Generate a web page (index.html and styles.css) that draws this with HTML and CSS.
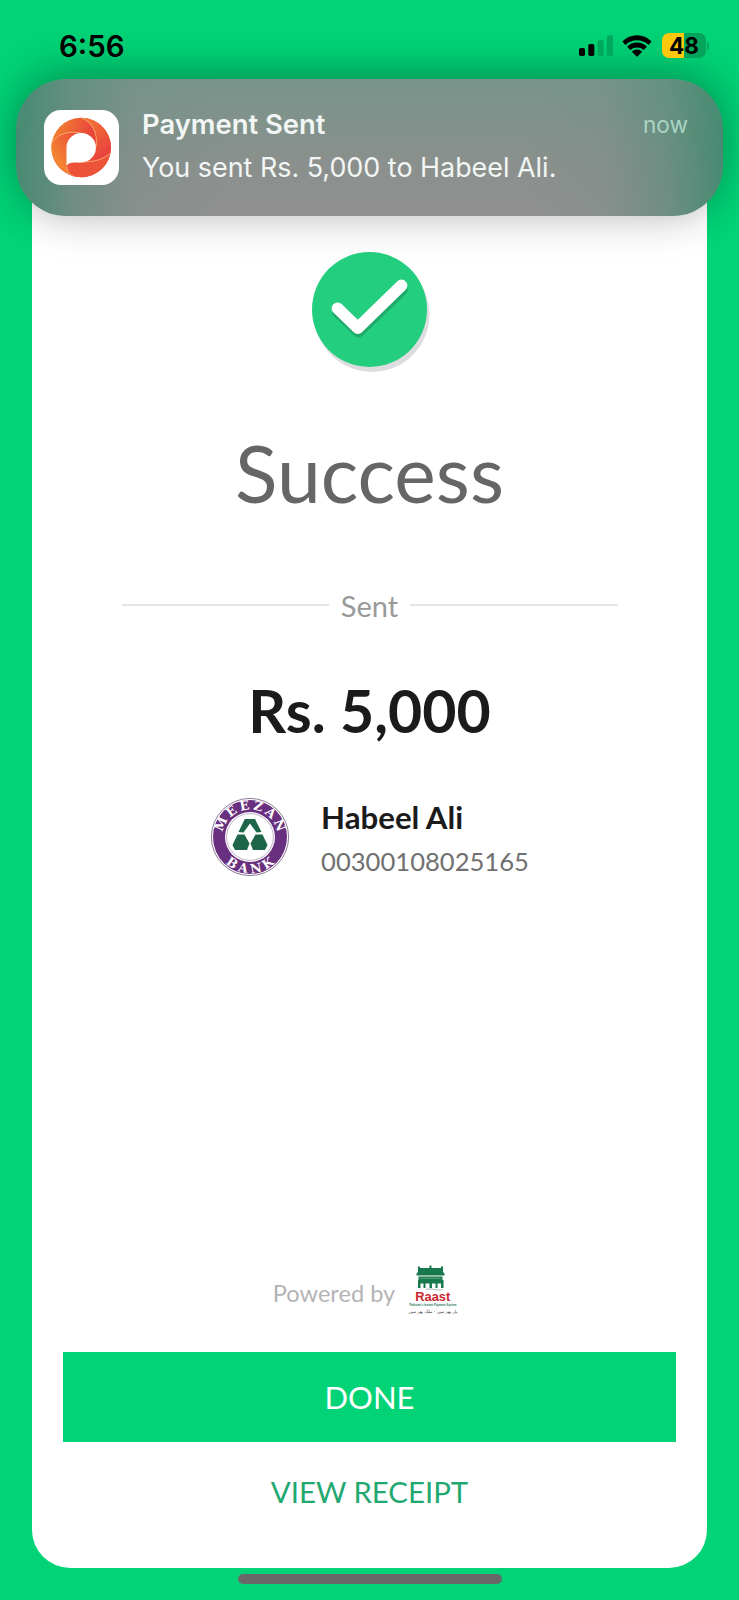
FILE: index.html
```html
<!DOCTYPE html>
<html lang="en">
<head>
<meta charset="utf-8">
<title>Payment Sent</title>
<link rel="stylesheet" href="styles.css">
</head>
<body>
<div class="screen">
  <header class="status">
    <span class="time">6:56</span>
    <div class="indicators">
      <svg class="signal" width="34" height="22" viewBox="0 0 34 22">
        <rect x="0" y="13" width="6" height="8" rx="1.8"/>
        <rect x="9.3" y="9" width="6" height="12" rx="1.8"/>
        <rect class="off" x="18.6" y="5" width="6" height="16" rx="1.8"/>
        <rect class="off" x="27.9" y="0.3" width="6" height="20.7" rx="1.8"/>
      </svg>
      <svg class="wifi" width="30" height="22" viewBox="0 0 30 22">
        <path d="M0.4 6.6C8.500-1.800 21.500-1.800 29.600 6.600L26.500 9.900C20.200 3.700 9.800 3.700 3.500 9.900Z"/>
        <path d="M5.100 11.700C10.700 6.200 19.300 6.200 24.900 11.700L21.700 15C18 11.700 12 11.700 8.300 15Z"/>
        <path d="M9.900 16.700C12.900 13.900 17.100 13.900 20.100 16.700L15.700 21.300Q15 22 14.300 21.300Z"/>
      </svg>
      <div class="battery"><span class="level">48</span><i class="cap"></i></div>
    </div>
  </header>

  <main class="card">
    <svg class="check" width="120" height="124" viewBox="0 0 120 124">
      <circle class="check-shadow" cx="60" cy="62.500" r="57.500"/>
      <circle class="check-disc" cx="57.500" cy="57.500" r="57.500"/>
      <path class="check-under" d="M26 60L46.500 79.500L90 37.500"/>
      <path class="check-mark" d="M25.500 56.300L45.800 76L89.500 33.500"/>
    </svg>
    <h1 class="title">Success</h1>
    <div class="divider"><span>Sent</span></div>
    <p class="amount">Rs. 5,000</p>
    <section class="payee">
      <svg class="bank" width="80" height="80" viewBox="0 0 80 80">
        <defs>
          <path id="arc-top" d="M12.500 40A27.500 27.500 0 0 1 67.500 40"/>
          <path id="arc-bottom" d="M4 40A36 36 0 0 0 76 40"/>
        </defs>
        <circle class="bank-rim" cx="40" cy="40" r="38.600"/>
        <circle class="bank-ring" cx="40" cy="40" r="37"/>
        <circle class="bank-core" cx="40" cy="40" r="25"/>
        <circle class="bank-line" cx="40" cy="40" r="23.400"/>
        <text class="bank-text"><textPath href="#arc-top" startOffset="50%" text-anchor="middle" textLength="77">MEEZAN</textPath></text>
        <text class="bank-text"><textPath href="#arc-bottom" startOffset="50%" text-anchor="middle" textLength="54">BANK</textPath></text>
        <path class="bank-sign" d="M34.800 22H45L51.500 35L46.500 35.500L40 26.500L33.500 35.500L28.500 35ZM27.500 37.500H34.500L39.500 46.500L37 53H25L22.500 48ZM45.500 37.500H52.500L57.500 48L55 53H43L40.500 46.500Z"/>
      </svg>
      <div class="payee-info">
        <span class="name">Habeel Ali</span>
        <span class="account">00300108025165</span>
      </div>
    </section>
    <div class="powered">
      <span>Powered by</span>
      <svg class="raast" width="52" height="54" viewBox="0 0 52 54">
        <path class="green" d="M21.500 0.500H23.500V3H33V1.500H35V7L36.500 8.500V10.500H8.500V8.500L10 7V1.500H12V3H21.500ZM10.500 11.500H34.500V15H10.500ZM10 15H35.500V23H33V18.500H29.500V23H27.500V18.500H24V23H21.500V18.500H17.500V23H15.500V18.500H12.500V23H10Z"/>
        <path class="slit" d="M12 13.300H33"/>
        <path class="swoosh" d="M18 24.500C23 22 28 27 35 24.500"/>
        <text class="raast-name" x="7.300" y="36.400" textLength="35" lengthAdjust="spacingAndGlyphs">Raast</text>
        <text class="raast-tag" x="1.500" y="40.500" textLength="47" lengthAdjust="spacingAndGlyphs">Pakistan's Instant Payment System</text>
        <text class="raast-urdu" x="25" y="48" text-anchor="middle">پل بھر میں - ملک بھر میں</text>
      </svg>
    </div>
    <button class="done">DONE</button>
    <a class="receipt">VIEW RECEIPT</a>
  </main>
  <div class="home-bar"></div>

  <aside class="notice">
    <svg class="app" width="75" height="75" viewBox="0 0 75 75">
      <defs>
        <linearGradient id="g1" x1="0" y1="0" x2="1" y2="0.300"><stop offset="0" stop-color="#f28b30"/><stop offset="0.700" stop-color="#e9443b"/></linearGradient>
        <linearGradient id="g2" x1="0" y1="0" x2="0.600" y2="1"><stop offset="0" stop-color="#f47f34"/><stop offset="1" stop-color="#e8403c"/></linearGradient>
        <linearGradient id="g3" x1="1" y1="0" x2="0" y2="1"><stop offset="0" stop-color="#ea403b"/><stop offset="0.700" stop-color="#f38333"/></linearGradient>
      </defs>
      <rect width="75" height="75" rx="17" fill="#fff"/>
      <circle cx="37.200" cy="37.500" r="29.800" fill="url(#g1)"/>
      <path d="M37 7.700C49 12 54 24 52 37C51 45 46 51 39 52H33C44 54 57 52 66.500 43A29.800 29.800 0 0 0 37 7.700Z" fill="url(#g2)"/>
      <path d="M7.700 33C14 23 25 21 39 23C26 25 23 31 23 39V57C23 61 26 65 29 66.100A29.800 29.800 0 0 1 7.700 33Z" fill="url(#g3)"/>
      <path d="M23 57C26 50 34 52 42 52C53 52 60 49 66.500 43A29.800 29.800 0 0 1 29 66.100C26 64 23 60 23 57Z" fill="#ed5338"/>
      <path class="seam" d="M37 7.700C49 12 54 24 52 37M7.700 33C14 23 25 21 37 23M66.500 43C57 52 44 52 34 52M23 57C23 61 26 65 29 66"/>
      <path d="M22.500 55.500V37.700A14.700 14.700 0 1 1 37.200 52.400H30Q25 52.400 22.500 55.500Z" fill="#fff"/>
    </svg>
    <div class="notice-text">
      <div class="notice-head"><strong>Payment Sent</strong><time>now</time></div>
      <p>You sent Rs. 5,000 to Habeel Ali.</p>
    </div>
  </aside>
</div>
</body>
</html>
```
FILE: styles.css
```css
* { box-sizing: border-box; }
body { margin: 0; }
.screen {
  position: relative;
  display: flex;
  flex-direction: column;
  align-items: center;
  width: 739px;
  height: 1600px;
  overflow: hidden;
  background: #02d376;
  font-family: Lato, sans-serif;
}

.status {
  display: flex;
  justify-content: space-between;
  width: 100%;
  height: 110px;
  padding: 28px 29px 0 59px;
  font-family: Inter, sans-serif;
  position: relative;
  z-index: 2;
}
.time { font-size: 29.5px; line-height: 36px; font-weight: 600; }
.indicators { display: flex; height: 35px; align-items: center; }
.off { fill: #00a85d; }
.wifi { margin: 0 10px 0 9px; }
.battery { display: flex; align-items: center; }
.level {
  width: 44px;
  height: 25px;
  border-radius: 7px;
  background: linear-gradient(90deg, #fdc70c 50%, #05a45c 50%);
  font-size: 22.5px;
  font-weight: 700;
  line-height: 25px;
  text-align: center;
}
.cap { width: 2px; height: 8px; margin: 0 1px; border-radius: 0 2px 2px 0; background: #05a45c; }

.card {
  display: flex;
  flex-direction: column;
  align-items: center;
  width: 675px;
  height: 1458px;
  padding-top: 142px;
  border-radius: 38px;
  background: #fff;
}
.check-shadow { fill: #dddde0; }
.check-disc { fill: #24ce7f; }
.check-under, .check-mark { fill: none; stroke-width: 11.8; stroke-linecap: round; stroke-linejoin: round; }
.check-under { stroke: #1eaa69; }
.check-mark { stroke: #fff; }
.check { margin-left: 4px; }
.title { margin: 57px 0 0; font-size: 78.6px; line-height: 80px; font-weight: 400; color: #666; }
.divider {
  display: flex;
  align-items: center;
  gap: 12px;
  width: 496px;
  height: 36px;
  margin-top: 74px;
  font-size: 29px;
  color: #999;
}
.divider::before, .divider::after { content: ""; flex: 1; height: 2px; background: #e5e5e5; }
.amount { margin: 53px 0 0; font-size: 59px; line-height: 70px; font-weight: 700; color: #1b1b1b; }
.payee { display: flex; gap: 31px; margin: 51px 0 0; height: 80px; }
.payee-info { display: flex; flex-direction: column; }
.name { font-size: 31.2px; line-height: 40px; font-weight: 700; color: #1b1b1b; }
.account { font-size: 25.6px; line-height: 48px; color: #707070; }
.bank-rim { fill: #fff; stroke: #8d7a98; stroke-width: 1; }
.bank-ring { fill: #68307e; }
.bank-core { fill: #fff; }
.bank-line { fill: none; stroke: #a792b3; stroke-width: 0.7; }
.bank-text { fill: #fff; font: bold 12.6px "DejaVu Serif", serif; }
.bank-sign { fill: #1f6549; }

.powered { display: flex; gap: 13px; height: 54px; margin: 388px 6px 0 0; font-size: 23.6px; line-height: 57px; color: #b4b4b6; }
.green { fill: #18794d; }
.slit { stroke: #6fae8e; stroke-width: 0.8; }
.swoosh { fill: none; stroke: #b8c8c0; stroke-width: 1.2; }
.raast-name { fill: #cb2831; font: bold 12.7px "Liberation Sans", sans-serif; }
.raast-tag { fill: #28754f; font: bold 3.2px "Liberation Sans", sans-serif; }
.raast-urdu { fill: #444; font: 4.5px "DejaVu Sans", sans-serif; }
.done {
  width: 613px;
  height: 90px;
  margin: 33px 0 0;
  padding: 0;
  border: 0;
  background: #02d376;
  color: #fff;
  font: 31px Lato, sans-serif;
}
.receipt { margin-top: 30px; font-size: 29.4px; line-height: 39px; color: #1fa971; }
.home-bar { width: 264px; height: 10px; margin-top: 6px; border-radius: 5px; background: #686868; }

.notice {
  position: absolute;
  z-index: 1;
  left: 16px;
  top: 79px;
  display: flex;
  gap: 23px;
  width: 707px;
  height: 137px;
  padding: 31px 35px 0 28px;
  border-radius: 50px;
  background:
    linear-gradient(90deg, rgba(55,137,108,.8) 0, rgba(80,138,118,.5) 8%, rgba(110,140,130,.2) 17%, rgba(130,142,137,0) 30%, rgba(130,142,137,0) 72%, rgba(110,142,130,.2) 83%, rgba(80,140,118,.5) 92%, rgba(55,137,108,.8) 100%),
    linear-gradient(#78958a, #8a908d 60%, #909090);
  box-shadow: 0 -6px 44px -2px rgba(0,0,0,.32), 0 10px 50px rgba(0,0,0,.06);
  color: #f2f6f4;
  font-family: Inter, sans-serif;
}
.app { flex: none; }
.seam { fill: none; stroke: #fbb072; stroke-width: 0.9; }
.notice-text { flex: 1; }
.notice-head { display: flex; justify-content: space-between; height: 27px; line-height: 28px; font-size: 27.4px; }
.notice-head strong { font-weight: 600; }
.notice-head time { font-size: 22.6px; line-height: 30px; color: #a9d5c4; }
.notice p { margin: 14px 0 0; font-size: 26.9px; line-height: 32px; }
```
